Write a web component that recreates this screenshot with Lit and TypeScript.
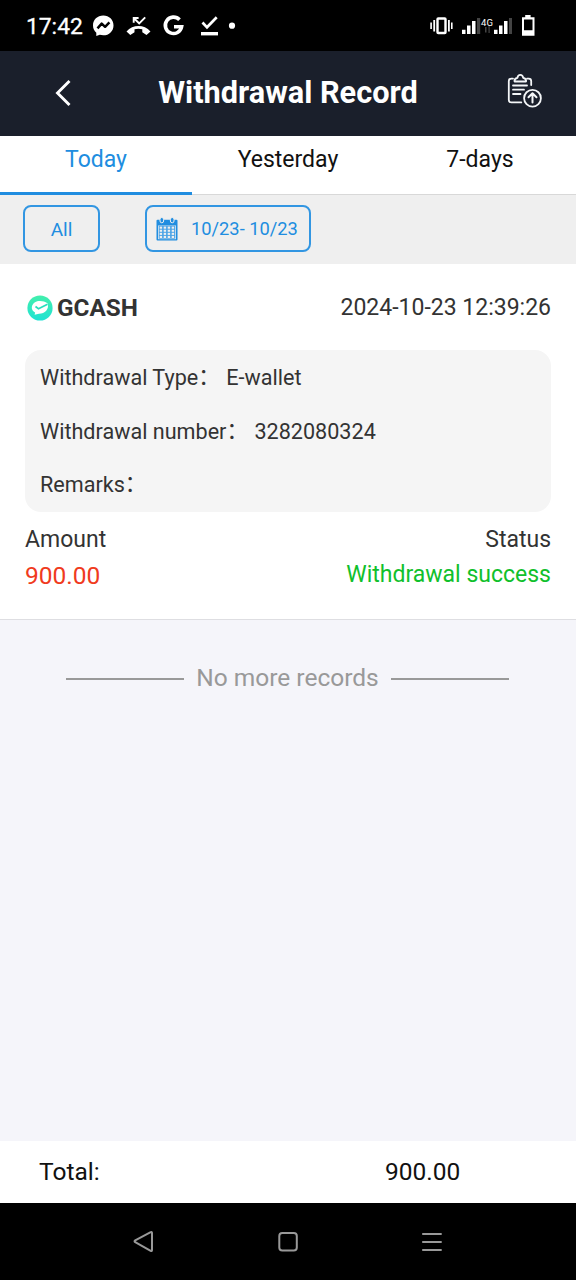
import { LitElement, html, css, svg } from "lit";
import { customElement } from "lit/decorators.js";

const dots = [0, 1, 2, 3].flatMap((r) =>
  [0, 1, 2, 3].map((c) => svg`<rect x=${3.7 + c * 4} y=${9.6 + r * 3.1} width="2.400" height="2.100" fill="#efefef"/>`)
);

const colon = html`<span class="colon">\uff1a</span>`;

@customElement("app-root")
export class AppRoot extends LitElement {
  static styles = css`
    :host {
      display: flex;
      flex-direction: column;
      width: 576px;
      height: 1280px;
      overflow: hidden;
      background: #f5f5fa;
      font-family: Roboto, "Noto Sans CJK SC", sans-serif;
      color: #333;
      white-space: nowrap;
    }
    * { box-sizing: border-box; }
    svg { display: block; flex: none; }
    .status { height: 51px; background: #000; color: #fff; flex: none; display: flex; }
    .clock { width: 90px; padding-left: 26px; font-size: 22.8px; font-weight: 400; line-height: 54px; -webkit-text-stroke: 0.3px #fff; }
    .header { height: 85px; flex: none; background: #1a1f2b; color: #fff; display: grid; grid-template-columns: 100px 1fr 100px; }
    .title { font-size: 30.7px; font-weight: 700; line-height: 83px; text-align: center; }
    .tabs { height: 59px; flex: none; background: #fff; display: grid; grid-template-columns: repeat(3, 1fr); color: #111; }
    .tab { font-size: 23px; line-height: 48px; text-align: center; border-bottom: 1px solid #d8d8d8; height: 59px; }
    .tab.active { color: #208de0; border-bottom: 3px solid #208de0; }
    .filters { height: 69px; flex: none; background: #efefef; display: flex; gap: 45px; padding: 10px 23px; color: #208de0; }
    .filter { height: 47px; border: 2px solid #3296e2; border-radius: 8px; display: flex; align-items: center; font-size: 19px; }
    .all { width: 77px; justify-content: center; padding-top: 2px; }
    .range { width: 166px; padding-left: 9px; gap: 13px; font-size: 18.3px; }
    .range span { margin-top: -1px; }
    .record { height: 356px; flex: none; background: #fff; border-bottom: 1px solid #dedee2; padding: 0 25px; }
    .top { height: 86px; display: flex; align-items: center; }
    .brand { display: flex; align-items: center; gap: 4px; flex: 1; padding: 1px 0 0 2px; font-size: 24.3px; font-weight: 700; }
    .date { font-size: 23px; }
    .details { height: 162px; border-radius: 16px; background: #f5f5f5; padding: 0 15px; display: grid; grid-template-rows: repeat(3, 53.5px); font-size: 21.6px; line-height: 55px; }
    .colon { display: inline-block; line-height: 1; margin-right: 1px; transform: translateY(-1px); }
    .pair { display: flex; justify-content: space-between; line-height: 36px; font-size: 23px; }
    .labels { padding-top: 10px; height: 45px; }
    .amount { color: #f03a20; font-size: 24.5px; line-height: 37px; }
    .success { color: #10c02c; }
    .more { display: flex; justify-content: center; align-items: center; gap: 12px; height: 118px; padding-right: 1px; color: #999; font-size: 24.5px; }
    .more-text { margin-top: -3px; }
    .rule { width: 118px; height: 2px; background: #999; }
    .spacer { flex: 1; }
    .total { height: 62px; flex: none; background: #fff; color: #111; display: flex; line-height: 62px; font-size: 24.5px; padding-left: 39px; }
    .total-label { width: 346px; }
    .nav { height: 77px; flex: none; background: #000; }
  `;

  render() {
    return html`
      <div class="status">
        <div class="clock">17:42</div>
        <svg width="486" height="51" viewBox="90 0 486 51" fill="#fff">
          <path d="M103.300 15.500c-6 0-10.300 4.300-10.300 9.900 0 3 1.300 5.500 3.300 7.300v3.300l3.500-1.200c1.100.3 2.200.5 3.500.5 5.900 0 10.200-4.300 10.200-9.900s-4.300-9.900-10.200-9.900z"/>
          <path d="M97.500 28.300l4.200-4.700 3.400 3.200 4.300-4.400" fill="none" stroke="#000" stroke-width="2.500" stroke-linejoin="round"/>
          <path d="M126.500 31.500c6.500-7.300 17.500-7.300 24 0l-4 3.400-4.200-2.600v-3c-2.600-.9-5.200-.9-7.800 0v3l-4.200 2.600z"/>
          <path d="M133.700 22.800V18h4.900M134.200 18.500l5 4.900 6-6" fill="none" stroke="#fff" stroke-width="1.900"/>
          <path d="M179.500 19.700a8.200 8.200 0 1 0 2.100 7H174" fill="none" stroke="#fff" stroke-width="3.600"/>
          <path d="M202.500 22.500l4.500 4.800 9.700-10" fill="none" stroke="#fff" stroke-width="2.700"/>
          <path d="M201 32h17v3.400h-17z"/>
          <circle cx="232" cy="25.700" r="3.100"/>
          <path d="M430.300 22.500h1.600v6.500h-1.600zM433.300 20h1.800v11.500h-1.800zM448 20h1.800v11.500H448zM451 22.500h1.600v6.500H451z"/>
          <rect x="437.500" y="18.500" width="8" height="14.500" rx=".8" fill="none" stroke="#fff" stroke-width="2.400"/>
          <path d="M462 29.700h3.500V34H462zM467 25.500h3.500V34H467zM472 21h3.500v13H472zM494 29.700h3.500V34H494zM499 25.500h3.500V34H499zM504 21h3.500v13H504z"/>
          <path d="M477 18h3.200v16H477zM509 18h3v16h-3zM485 27h1.500v5.500H485zM488.500 26h1.200v7h-1.200z" fill="#444"/>
          <text x="481" y="26" font-size="9.500" textLength="12">4G</text>
          <path d="M522 17.300h3.200v-2.300h5.400v2.300h3.900v18.400H522zM524 19.500v10.700h8.500V19.500z" fill-rule="evenodd"/>
        </svg>
      </div>
      <div class="header">
        <svg width="100" height="85" viewBox="0 51 100 85" fill="none" stroke="#fff" stroke-width="2.900"><path d="M69.500 81L57.500 93l12 12"/></svg>
        <div class="title">Withdrawal Record</div>
        <svg width="100" height="85" viewBox="476 51 100 85" fill="none" stroke="#f4f6f8" stroke-width="1.800" stroke-linecap="round" stroke-linejoin="round">
          <path d="M513 78.600h-1.700a2.500 2.500 0 0 0-2.500 2.500v18.800a2.500 2.500 0 0 0 2.500 2.500h10M527 78.600h1.700a2.500 2.500 0 0 1 2.500 2.500V85"/>
          <path d="M514.500 81.500q-.4-3 2.900-3.700c.7-4 5.100-4 5.800 0q3.300.7 2.900 3.700z"/>
          <path d="M513 85.500h14M513 89.700h11M513 94h7.500"/>
          <circle cx="532.500" cy="98.200" r="8.400"/>
          <path d="M532.500 102.500v-9M528.500 97.200l4-4 4 4" stroke-width="2"/>
        </svg>
      </div>
      <div class="tabs">
        <div class="tab active">Today</div>
        <div class="tab">Yesterday</div>
        <div class="tab">7-days</div>
      </div>
      <div class="filters">
        <div class="filter all">All</div>
        <div class="filter range">
          <svg width="22" height="24" viewBox="0 0 22 24">
            <rect x=".5" y="2.800" width="21" height="20.700" rx="1" fill="#208de0"/>
            <path d="M2 8.500h18v13.700H2z" fill="#efefef"/>
            <path d="M2.700 8.800h16.600v12.900H2.700z" fill="#4ba3e6"/>${dots}
            <g fill="#208de0" stroke="#efefef" stroke-width="1"><rect x="4" y=".5" width="3.600" height="5.300" rx="1.800"/><rect x="14.400" y=".5" width="3.600" height="5.300" rx="1.800"/></g>
          </svg>
          <span>10/23- 10/23</span>
        </div>
      </div>
      <div class="record">
        <div class="top">
          <div class="brand">
            <svg width="26" height="26" viewBox="0 0 26 26">
              <defs><linearGradient id="g" x2="0" y2="1"><stop stop-color="#43efac"/><stop offset="1" stop-color="#20e2d4"/></linearGradient></defs>
              <circle cx="13" cy="13" r="12.600" fill="url(#g)"/>
              <path d="M20.500 8.200c2.200 5.700-2.700 10.500-8.500 10.500l-4.400 1 .5-2.200c-6-3.200-3.200-11.500 4.900-11.500 3 0 5 .7 7.500 2.200z" fill="#fff"/>
              <path d="M8.500 11.500l3 2.200 9-4.500" fill="none" stroke="#27dfbd" stroke-width="1.700"/>
            </svg>
            <span>GCASH</span>
          </div>
          <div class="date">2024-10-23 12:39:26</div>
        </div>
        <div class="details">
          <div>Withdrawal Type${colon} E-wallet</div>
          <div>Withdrawal number${colon} 3282080324</div>
          <div>Remarks${colon}</div>
        </div>
        <div class="pair labels"><span>Amount</span><span>Status</span></div>
        <div class="pair"><span class="amount">900.00</span><span class="success">Withdrawal success</span></div>
      </div>
      <div class="more"><span class="rule"></span><span class="more-text">No more records</span><span class="rule"></span></div>
      <div class="spacer"></div>
      <div class="total"><span class="total-label">Total:</span><span>900.00</span></div>
      <div class="nav">
        <svg width="576" height="77" viewBox="0 1203 576 77" fill="none" stroke="#999" stroke-width="2" stroke-linejoin="round">
          <path d="M150.700 1232.200q1.300-.8 1.300.8v17q0 1.600-1.300.8l-15.500-8.600q-1.300-1 0-1.900z"/>
          <rect x="279.300" y="1233" width="17.500" height="17.500" rx="3"/>
          <path d="M422.200 1234h19.500M422.200 1242h19.500M422.200 1250h19.500" stroke-width="2.200"/>
        </svg>
      </div>
    `;
  }
}
